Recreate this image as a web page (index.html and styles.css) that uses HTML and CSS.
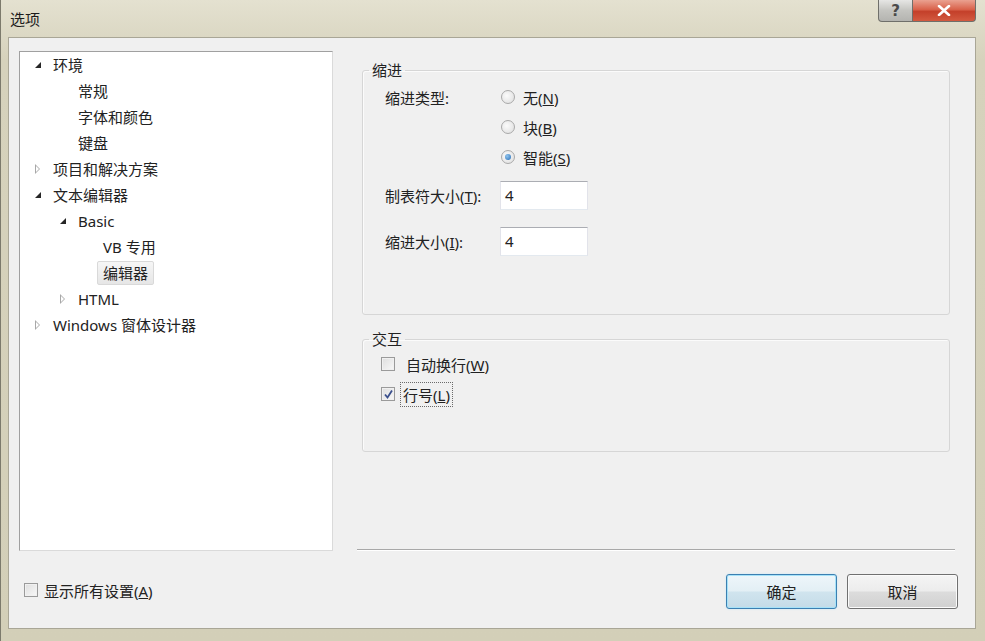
FILE: index.html
```html
<!DOCTYPE html>
<html>
<head>
    <meta charset="utf-8">
    <title>选项</title>
    <link rel="stylesheet" href="styles.css">
</head>
<body>
    <div class="window">
        <div class="titlebar">
            <div class="title">选项</div>
            <div class="caption-btns">
                <div class="cap-btn cap-help">?</div>
                <div class="cap-btn cap-close">
                    <svg width="14" height="11" viewBox="0 0 14 11"><path d="M2 1 L12 10 M12 1 L2 10" stroke="#fff" stroke-width="2.6" stroke-linecap="round"/></svg>
                </div>
            </div>
        </div>

        <div class="client">
            <div class="main">
                <!-- 左侧树 -->
                <div class="tree">
                    <div class="node lv0"><span class="arrow open"></span><span class="label">环境</span></div>
                    <div class="node lv1"><span class="arrow"></span><span class="label">常规</span></div>
                    <div class="node lv1"><span class="arrow"></span><span class="label">字体和颜色</span></div>
                    <div class="node lv1"><span class="arrow"></span><span class="label">键盘</span></div>
                    <div class="node lv0"><span class="arrow closed"></span><span class="label">项目和解决方案</span></div>
                    <div class="node lv0"><span class="arrow open"></span><span class="label">文本编辑器</span></div>
                    <div class="node lv1"><span class="arrow open"></span><span class="label">Basic</span></div>
                    <div class="node lv2"><span class="arrow"></span><span class="label">VB 专用</span></div>
                    <div class="node lv2"><span class="arrow"></span><span class="label selected">编辑器</span></div>
                    <div class="node lv1"><span class="arrow closed"></span><span class="label">HTML</span></div>
                    <div class="node lv0"><span class="arrow closed"></span><span class="label">Windows 窗体设计器</span></div>
                </div>

                <!-- 右侧设置 -->
                <div class="pane">
                    <fieldset class="group group-indent">
                        <legend>缩进</legend>
                        <div class="gbody">
                            <div class="row">
                                <span class="lbl">缩进类型:</span>
                                <span class="radio"></span><span>无(<u>N</u>)</span>
                            </div>
                            <div class="row">
                                <span class="lbl"></span>
                                <span class="radio"></span><span>块(<u>B</u>)</span>
                            </div>
                            <div class="row">
                                <span class="lbl"></span>
                                <span class="radio checked"></span><span>智能(<u>S</u>)</span>
                            </div>
                            <div class="row row-input">
                                <span class="lbl">制表符大小(<u>T</u>):</span>
                                <div class="textbox">4</div>
                            </div>
                            <div class="row row-input second">
                                <span class="lbl">缩进大小(<u>I</u>):</span>
                                <div class="textbox">4</div>
                            </div>
                        </div>
                    </fieldset>

                    <fieldset class="group group-interact">
                        <legend>交互</legend>
                        <div class="gbody">
                            <div class="row">
                                <span class="check"></span><span class="ctext">自动换行(<u>W</u>)</span>
                            </div>
                            <div class="row">
                                <span class="check checked">
                                    <svg width="11" height="11" viewBox="0 0 11 11"><path d="M2 5.5 L4.5 8.5 L9 1.5" fill="none" stroke="#3a4f8c" stroke-width="1.8"/></svg>
                                </span><span class="ctext focus">行号(<u>L</u>)</span>
                            </div>
                        </div>
                    </fieldset>

                    <div class="sep"></div>
                </div>
            </div>

            <div class="bottom">
                <span class="check"></span><span class="ctext">显示所有设置(<u>A</u>)</span>
                <div class="buttons">
                    <div class="btn default">确定</div>
                    <div class="btn">取消</div>
                </div>
            </div>
        </div>
    </div>
</body>
</html>
```

FILE: styles.css
```css
* {
    margin: 0;
    padding: 0;
    box-sizing: border-box;
}

body {
    font-family: "Noto Sans", "Noto Sans CJK SC", sans-serif;
    font-size: 15px;
    color: #222;
    width: 985px;
    height: 641px;
    overflow: hidden;
}

.window {
    height: 641px;
    display: flex;
    flex-direction: column;
    background: linear-gradient(#e4e1d0, #d6d2bc 60px, #d3cfb8);
    border-left: 1px solid #7c7a6c;
}

.titlebar {
    height: 37px;
    display: flex;
    justify-content: space-between;
}

.title {
    padding: 8px 0 0 9px;
    font-size: 15px;
    color: #1c1c1c;
}

.caption-btns {
    display: flex;
    margin-right: 9px;
    height: 22px;
}

.cap-btn {
    height: 22px;
    display: flex;
    align-items: center;
    justify-content: center;
    border: 1px solid #6f6f6a;
    border-top: none;
}

.cap-help {
    width: 35px;
    background: linear-gradient(#e6e6e4, #c4c4c0 50%, #b4b4b0);
    border-radius: 0 0 0 4px;
    color: #4a4a4a;
    font-weight: bold;
    font-size: 15px;
    font-family: "DejaVu Sans", sans-serif;
}

.cap-close {
    width: 63px;
    background: linear-gradient(#eaa190, #d9624b 45%, #c4402a 55%, #d35a40);
    border-left: none;
    border-radius: 0 0 4px 0;
}

.client {
    flex: 1;
    margin: 0 9px 12px 7px;
    background: #f0f0f0;
    border: 1px solid #a9a696;
    padding: 13px 17px 0 10px;
    display: flex;
    flex-direction: column;
}

.main {
    display: flex;
    height: 500px;
}

/* 树 */
.tree {
    width: 314px;
    background: #fff;
    border: 1px solid #a0a0a0;
    border-right-color: #dadada;
    border-bottom-color: #dadada;
}

.node {
    height: 26px;
    display: flex;
    align-items: center;
    padding-left: 15px;
    white-space: nowrap;
}

.node.lv1 { padding-left: 40px; }
.node.lv2 { padding-left: 65px; }

.arrow {
    width: 12px;
    height: 10px;
    position: relative;
}

.arrow.open::before {
    content: "";
    position: absolute;
    left: 0;
    top: 2px;
    border-style: solid;
    border-width: 0 0 6px 6px;
    border-color: transparent transparent #262626 transparent;
}

.arrow.closed::before {
    content: "";
    position: absolute;
    left: 0;
    top: 0;
    border-style: solid;
    border-width: 5px 0 5px 5px;
    border-color: transparent transparent transparent #a8a8a8;
}

.arrow.closed::after {
    content: "";
    position: absolute;
    left: 1px;
    top: 2px;
    border-style: solid;
    border-width: 3px 0 3px 3px;
    border-color: transparent transparent transparent #fff;
}

.label {
    height: 24px;
    line-height: 22px;
    padding: 0 5px;
    border: 1px solid transparent;
    border-radius: 2px;
}

.label.selected {
    background: linear-gradient(#f6f6f6, #e6e6e6);
    border-color: #d9d9d9;
}

/* 右侧面板 */
.pane {
    flex: 1;
    margin: 0 3px 0 24px;
    display: flex;
    flex-direction: column;
}

.group {
    margin: 0 5px;
    padding: 0;
    border: 1px solid #d6d6d6;
    border-radius: 3px;
    box-shadow: inset 1px 1px 0 #fbfbfb;
}

.group legend {
    margin-left: 6px;
    padding: 0 3px;
    line-height: 16px;
}

.group-indent {
    margin-top: 11px;
    height: 253px;
}

.group-indent .gbody {
    padding: 8px 0 0 22px;
}

.group-interact {
    margin-top: 16px;
    height: 121px;
}

.group-interact .gbody {
    padding: 6px 0 0 18px;
}

.row {
    display: flex;
    align-items: center;
    height: 22px;
    margin-bottom: 8px;
}

.row .lbl {
    width: 116px;
}

.radio {
    width: 14px;
    height: 14px;
    border-radius: 50%;
    border: 1px solid #a9a9a9;
    background: radial-gradient(circle at 40% 40%, #fbfbfb, #dcdcdc);
    margin-right: 8px;
    position: relative;
}

.radio.checked::after {
    content: "";
    position: absolute;
    left: 3px;
    top: 3px;
    width: 6px;
    height: 6px;
    border-radius: 50%;
    background: radial-gradient(circle at 35% 35%, #8fc3ee, #2a6fb5);
}

.row-input {
    height: 29px;
    margin-top: 13px;
    margin-bottom: 0;
}

.row-input.second {
    margin-top: 17px;
}

.textbox {
    width: 88px;
    height: 29px;
    background: #fff;
    border: 1px solid #e2e3ea;
    border-top-color: #abadb3;
    border-bottom-color: #e3e9ef;
    padding: 3px 0 0 4px;
    margin-left: -1px;
}

.check {
    width: 14px;
    height: 14px;
    border: 1px solid #9a9a9a;
    background: linear-gradient(135deg, #dedede, #f8f8f8);
    box-shadow: inset 0 0 0 1px #f0f0f0;
    display: flex;
    align-items: center;
    justify-content: center;
}

.ctext {
    margin-left: 8px;
    padding: 1px 2px;
    border: 1px solid transparent;
}

.ctext.focus {
    margin-left: 5px;
    border: 1px dotted #6a6a6a;
}

.sep {
    margin-top: auto;
    height: 2px;
    border-top: 1px solid #a8a8a8;
    border-bottom: 1px solid #fff;
}

/* 底部 */
.bottom {
    height: 77px;
    display: flex;
    align-items: center;
    padding-left: 5px;
    padding-top: 1px;
}

.bottom .check {
    width: 14px;
    height: 14px;
}

.bottom .ctext {
    margin-left: 3px;
}

.buttons {
    margin-left: auto;
    display: flex;
    gap: 10px;
    padding-top: 2px;
}

.btn {
    width: 111px;
    height: 35px;
    display: flex;
    align-items: center;
    justify-content: center;
    border: 1px solid #707070;
    border-radius: 3px;
    background: linear-gradient(#f4f4f4, #ececec 48%, #dcdcdc 52%, #d0d0d0);
    box-shadow: inset 0 0 0 1px #fbfbfb;
}

.btn.default {
    border-color: #3c7fb1;
    background: linear-gradient(#eef6fa, #e3eff5 48%, #d0e4ee 52%, #c4dbe7);
    box-shadow: inset 0 0 0 1px #a6e2f8, 0 0 2px #bfe6f7;
}
```
